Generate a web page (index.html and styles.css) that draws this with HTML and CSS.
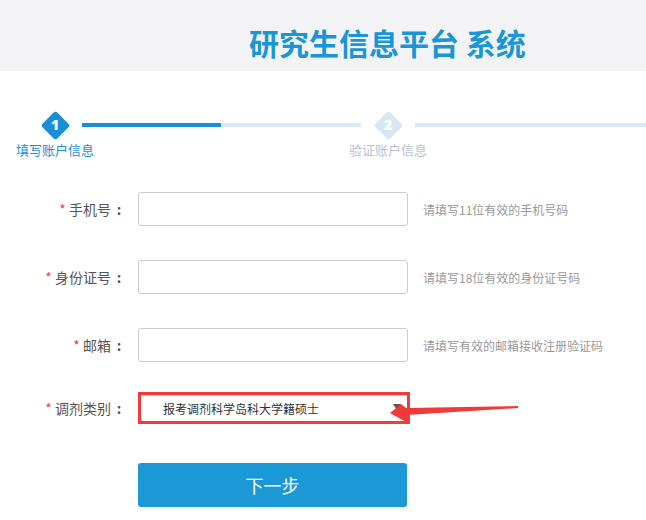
FILE: index.html
```html
<!DOCTYPE html>
<html lang="zh-CN">
<head>
<meta charset="utf-8">
<title>研究生信息平台 系统</title>
<link rel="stylesheet" href="styles.css">
</head>
<body>
<div class="page">
  <header class="header">
    <h1 class="title">研究生信息平台 系统</h1>
  </header>

  <div class="steps">
    <div class="step-row">
      <div class="diamond active"><span class="shape"></span><span class="num">1</span></div>
      <div class="line first"><span class="fill"></span></div>
      <div class="diamond"><span class="shape"></span><span class="num">2</span></div>
      <div class="line rest"></div>
    </div>
    <div class="label-row">
      <span class="step-label active">填写账户信息</span>
      <span class="step-label second">验证账户信息</span>
    </div>
  </div>

  <form class="form">
    <div class="row">
      <label class="field-label"><span class="req">*</span> 手机号<span class="colon">:</span></label>
      <input class="input" type="text">
      <span class="hint">请填写11位有效的手机号码</span>
    </div>
    <div class="row">
      <label class="field-label"><span class="req">*</span> 身份证号<span class="colon">:</span></label>
      <input class="input" type="text">
      <span class="hint">请填写18位有效的身份证号码</span>
    </div>
    <div class="row">
      <label class="field-label"><span class="req">*</span> 邮箱<span class="colon">:</span></label>
      <input class="input" type="text">
      <span class="hint">请填写有效的邮箱接收注册验证码</span>
    </div>
    <div class="row select-row">
      <label class="field-label"><span class="req">*</span> 调剂类别<span class="colon">:</span></label>
      <div class="select">
        <div class="select-inner">
          <span class="select-text">报考调剂科学岛科大学籍硕士</span>
          <span class="caret"></span>
        </div>
      </div>
    </div>
    <div class="row btn-row">
      <button type="button" class="btn">下一步</button>
    </div>
  </form>

  <svg class="annot-arrow" width="145" height="35" viewBox="0 0 145 35">
    <polygon points="138,11 26,13 21,9 10,18 28,28 27,20 138,13" fill="#f03a3a"/>
  </svg>
</div>
</body>
</html>
```

FILE: styles.css
```css
html, body {
  margin: 0;
  padding: 0;
  background: #ffffff;
}

body {
  font-family: "Noto Sans CJK SC", "Noto Sans", "Liberation Sans", sans-serif;
  color: #555;
}

.page {
  position: relative;
  width: 646px;
  height: 520px;
  overflow: hidden;
}

.header {
  height: 71px;
  background: #f3f3f5;
  box-sizing: border-box;
  padding: 25px 0 0 249px;
}

.title {
  margin: 0;
  font-size: 30px;
  line-height: 34px;
  font-weight: 700;
  color: #1a96d6;
  letter-spacing: 0;
  white-space: nowrap;
}

/* steps */
.steps {
  margin-top: 39px;
}

.step-row {
  display: flex;
  align-items: center;
  height: 30px;
  padding-left: 40px;
}

.diamond {
  display: grid;
  place-items: center;
  width: 30px;
  height: 30px;
  flex: none;
}

.diamond .shape,
.diamond .num {
  grid-area: 1 / 1;
}

.diamond .shape {
  width: 21px;
  height: 21px;
  border-radius: 3px;
  background: #d8e8f3;
  transform: rotate(45deg);
}

.diamond.active .shape {
  background: #1a8fd6;
}

.diamond .num {
  position: relative;
  font-family: "Open Sans", "Liberation Sans", sans-serif;
  font-weight: 800;
  font-size: 14px;
  line-height: 14px;
  color: #ffffff;
}

.line {
  height: 4px;
  background: #d8e8f3;
}

.line.first {
  width: 279px;
  margin: 0 12px;
  display: flex;
}

.line.first .fill {
  width: 139px;
  background: #1a8fd6;
}

.line.rest {
  flex: 1;
  margin-left: 12px;
}

.label-row {
  display: flex;
  margin-top: 2px;
  padding-left: 16px;
}

.step-label {
  width: 78px;
  text-align: center;
  font-size: 13px;
  line-height: 16px;
  color: #b9c3cc;
  white-space: nowrap;
}

.step-label.active {
  color: #1a8fd6;
}

.step-label.second {
  margin-left: 255px;
}

/* form */
.form {
  margin: 34px 0 0;
}

.row {
  display: flex;
  align-items: center;
  height: 34px;
  margin-bottom: 34px;
}

.field-label {
  width: 127px;
  margin-right: 11px;
  text-align: right;
  font-size: 14px;
  color: #555;
  white-space: nowrap;
}

.colon {
  display: inline-block;
  width: 16px;
  text-align: center;
  font-weight: 700;
}

.req {
  color: #ee4040;
}

.input {
  width: 270px;
  height: 34px;
  box-sizing: border-box;
  border: 1px solid #cccccc;
  border-radius: 3px;
  background: #fff;
  padding: 0 8px;
  margin: 0;
  font-size: 13px;
}

.hint {
  margin-left: 15px;
  font-size: 12px;
  color: #999;
  white-space: nowrap;
}

.row:nth-child(3) {
  margin-bottom: 30px;
}

.select-row {
  height: 32px;
  margin-bottom: 39px;
}

.select {
  width: 272px;
  height: 32px;
  box-sizing: border-box;
  border: 3px solid #f03c3c;
}

.select-inner {
  display: flex;
  align-items: center;
  height: 100%;
  box-sizing: border-box;
  border-top: 1px solid #d5d5d5;
  padding: 0 6px 0 22px;
}

.select-text {
  flex: 1;
  font-size: 12px;
  color: #333;
  white-space: nowrap;
}

.caret {
  width: 0;
  height: 0;
  border-left: 4px solid transparent;
  border-right: 4px solid transparent;
  border-top: 6px solid #555;
  margin-top: -3px;
}

.btn-row {
  height: 44px;
  padding-left: 138px;
  margin-bottom: 0;
}

.btn {
  width: 269px;
  height: 44px;
  border: none;
  border-radius: 3px;
  background: #1b98d6;
  color: #fff;
  font-family: "Noto Sans CJK SC", "Noto Sans", sans-serif;
  font-size: 18px;
  cursor: pointer;
}

.annot-arrow {
  position: absolute;
  left: 380px;
  top: 395px;
}
```
